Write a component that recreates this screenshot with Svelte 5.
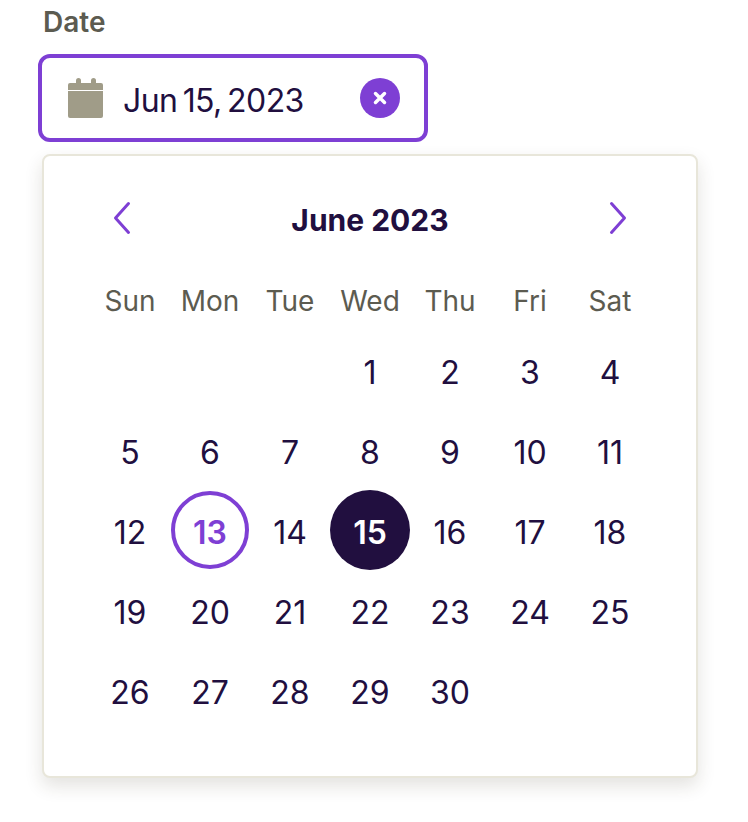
<script>
	const weekdays = ['Sun', 'Mon', 'Tue', 'Wed', 'Thu', 'Fri', 'Sat'];
	const leading = 3;
	const days = Array.from({ length: 30 }, (_, i) => i + 1);
	const today = 13;

	let selected = $state(15);
</script>

<div class="field">
	<div class="label">Date</div>

	<div class="input">
		<svg class="cal" viewBox="0 0 35 40" aria-hidden="true">
			<rect x="8" y="0" width="5" height="9" rx="2.5" />
			<rect x="23" y="0" width="5" height="9" rx="2.5" />
			<path d="M2 5h31a2 2 0 0 1 2 2v5H0V7a2 2 0 0 1 2-2Z" />
			<path d="M0 13h35v25a2 2 0 0 1-2 2H2a2 2 0 0 1-2-2Z" />
		</svg>
		<span class="value">Jun 15, 2023</span>
		<button class="clear" aria-label="Clear date">
			<svg viewBox="0 0 14 14" aria-hidden="true">
				<path d="M2.5 2.5l9 9M11.5 2.5l-9 9" />
			</svg>
		</button>
	</div>

	<div class="popup">
		<header>
			<button class="nav" aria-label="Previous month">
				<svg viewBox="0 0 20 34" aria-hidden="true"><path d="M16.5 2.5 3.5 17l13 14.5" /></svg>
			</button>
			<strong>June 2023</strong>
			<button class="nav" aria-label="Next month">
				<svg viewBox="0 0 20 34" aria-hidden="true"><path d="M3.5 2.5 16.5 17l-13 14.5" /></svg>
			</button>
		</header>

		<div class="grid">
			{#each weekdays as day}
				<span class="weekday">{day}</span>
			{/each}
			{#each { length: leading } as _}
				<span></span>
			{/each}
			{#each days as day}
				<button
					class="day"
					class:today={day === today}
					class:selected={day === selected}
					onclick={() => (selected = day)}
				>
					{day}
				</button>
			{/each}
		</div>
	</div>
</div>

<style>
	:global(body) {
		background: white;
	}

	.field {
		width: 748px;
		height: 822px;
		box-sizing: border-box;
		padding: 4px 0 0 38px;
		font-family: 'Inter', 'Liberation Sans', sans-serif;
		color: #210f3f;
	}

	button {
		border: 0;
		padding: 0;
		background: none;
		font: inherit;
		color: inherit;
	}

	.label {
		margin-left: 5px;
		height: 36px;
		line-height: 36px;
		font-size: 28px;
		font-weight: 600;
		color: #5c5b50;
	}

	.input {
		display: flex;
		align-items: center;
		box-sizing: border-box;
		width: 390px;
		height: 88px;
		margin-top: 14px;
		padding: 0 24px 0 26px;
		border: 4px solid #7e3fd4;
		border-radius: 12px;
	}

	.cal {
		width: 35px;
		height: 40px;
		fill: #a09c88;
	}

	.value {
		flex: 1;
		margin-left: 20px;
		padding-top: 4px;
		font-size: 32px;
		letter-spacing: -0.6px;
		word-spacing: -3px;
	}

	.clear {
		display: grid;
		place-items: center;
		width: 40px;
		height: 40px;
		border-radius: 50%;
		background: #7e3fd4;
	}

	.clear svg {
		width: 14px;
		height: 14px;
		fill: none;
		stroke: white;
		stroke-width: 3.5;
		stroke-linecap: round;
	}

	.popup {
		box-sizing: border-box;
		width: 656px;
		height: 624px;
		margin: 12px 0 0 4px;
		padding: 0 46px;
		border: 2px solid #e8e6da;
		border-radius: 8px;
		background: white;
		box-shadow: 0 8px 18px rgb(60 50 30 / 0.14);
	}

	header {
		display: flex;
		align-items: center;
		justify-content: space-between;
		height: 128px;
		padding: 0 22px;
	}

	strong {
		font-size: 30px;
		font-weight: 700;
	}

	.nav {
		display: block;
		width: 20px;
		height: 34px;
		margin-bottom: 4px;
	}

	.nav svg {
		display: block;
		width: 20px;
		height: 34px;
		fill: none;
		stroke: #7e3fd4;
		stroke-width: 3;
		stroke-linecap: round;
		stroke-linejoin: round;
	}

	.grid {
		display: grid;
		grid-template-columns: repeat(7, 80px);
		grid-template-rows: 46px;
		grid-auto-rows: 80px;
	}

	.weekday {
		display: grid;
		place-items: center;
		height: 30px;
		font-size: 28px;
		color: #5c5b50;
	}

	.day {
		display: grid;
		place-items: center;
		box-sizing: border-box;
		width: 80px;
		height: 80px;
		padding-top: 4px;
		border-radius: 50%;
		font-size: 32px;
	}

	.day.today {
		border: 4px solid #7e3fd4;
		width: 78px;
		height: 78px;
		margin: 1px;
		color: #7e3fd4;
		font-weight: 600;
	}

	.day.selected {
		background: #210f3f;
		color: white;
		font-weight: 600;
	}
</style>
